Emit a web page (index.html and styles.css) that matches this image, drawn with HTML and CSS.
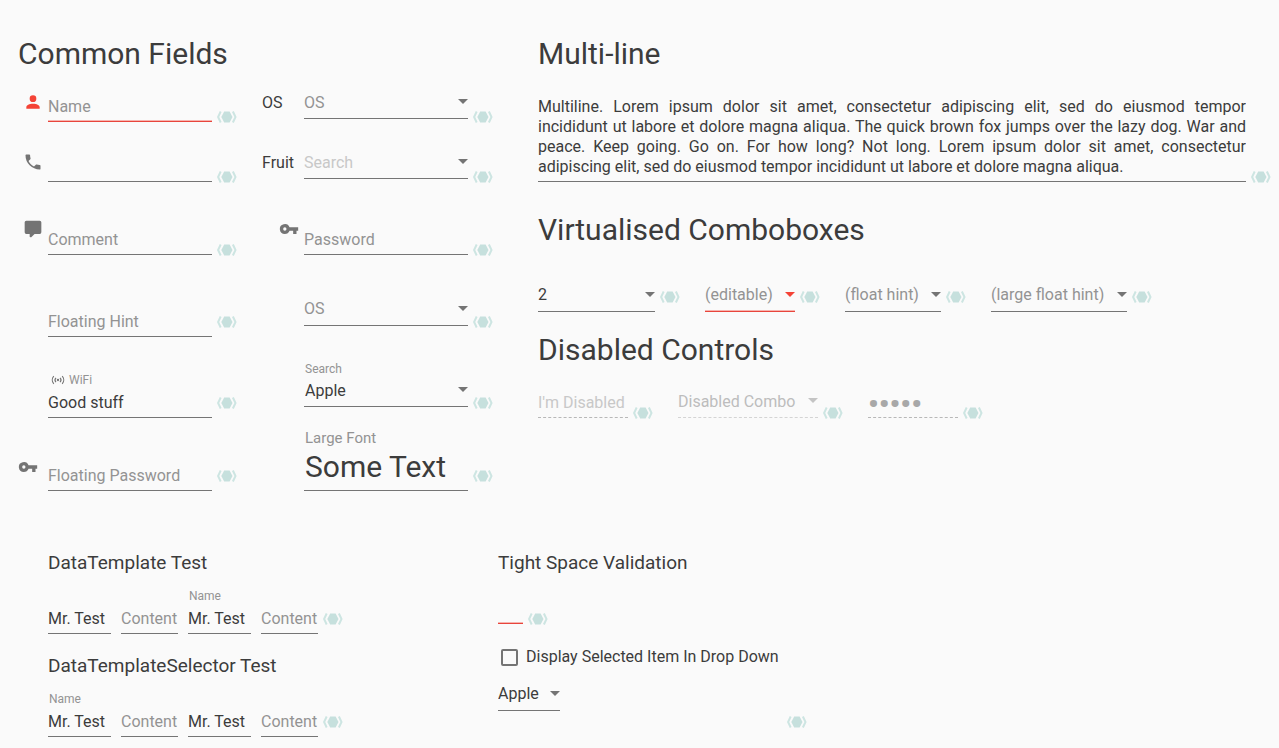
FILE: index.html
```html
<!DOCTYPE html>
<html lang="en">
<head>
  <meta charset="UTF-8" />
  <title>Fields</title>
  <meta name="viewport" content="width=device-width, initial-scale=1.0" />
  <link rel="stylesheet" href="styles.css">
</head>

<body>

  <!-- shared icons -->
  <svg class="sprite" aria-hidden="true">
    <symbol id="marker" viewBox="0 0 20 12">
      <path d="M7.200.6h5.400l2.900 5.400-2.900 5.400H7.200L4.300 6z" fill="#c6e0dd" />
      <path d="M3.700.5L1.100 6l2.600 5.500M15.900.5L18.500 6l-2.600 5.500" fill="none" stroke="#cde5e2" stroke-width="2" />
    </symbol>
    <symbol id="account" viewBox="0 0 24 24">
      <path d="M12 4a4 4 0 1 1 0 8 4 4 0 0 1 0-8zm0 10c4.400 0 8 1.800 8 4v2H4v-2c0-2.200 3.600-4 8-4z" />
    </symbol>
    <symbol id="phone" viewBox="0 0 24 24">
      <path d="M6.620 10.790c1.440 2.830 3.760 5.150 6.590 6.590l2.200-2.200c.28-.28.67-.36 1.020-.25 1.120.37 2.320.57 3.570.57a1 1 0 0 1 1 1V20a1 1 0 0 1-1 1A17 17 0 0 1 3 4a1 1 0 0 1 1-1h3.500a1 1 0 0 1 1 1c0 1.250.2 2.450.57 3.570.11.35.03.74-.25 1.020l-2.200 2.200z" />
    </symbol>
    <symbol id="comment" viewBox="0 0 24 24">
      <path d="M9 22a1 1 0 0 1-1-1v-3H4a2 2 0 0 1-2-2V4a2 2 0 0 1 2-2h16a2 2 0 0 1 2 2v12a2 2 0 0 1-2 2h-6.100l-3.700 3.710c-.2.190-.45.290-.7.290H9z" />
    </symbol>
    <symbol id="key" viewBox="0 0 24 24">
      <path d="M7 14a2 2 0 1 1 0-4 2 2 0 0 1 0 4zm5.650-4A6 6 0 1 0 7 18c2.610 0 4.830-1.670 5.650-4H17v4h4v-4h2v-4H12.650z" />
    </symbol>
    <symbol id="wifi" viewBox="0 0 24 24">
      <circle cx="12" cy="12" r="2" />
      <path d="M8.500 8.500a5 5 0 0 0 0 7M15.500 8.500a5 5 0 0 1 0 7M4.800 5.500a9.500 9.500 0 0 0 0 13M19.200 5.500a9.500 9.500 0 0 1 0 13" fill="none" stroke="currentColor" stroke-width="2" />
    </symbol>
  </svg>

  <main>
    <div class="top">

      <!-- Common fields -->
      <section>
        <h1>Common Fields</h1>
        <div class="common">
          <svg class="icon error"><use href="#account" /></svg>
          <input class="text error" type="text" placeholder="Name" aria-label="Name" />
          <svg class="marker"><use href="#marker" /></svg>
          <label class="side" for="os">OS</label>
          <select class="combo hint raised" id="os"><option>OS</option></select>
          <svg class="marker"><use href="#marker" /></svg>

          <svg class="icon"><use href="#phone" /></svg>
          <input class="text" type="tel" aria-label="Phone" />
          <svg class="marker"><use href="#marker" /></svg>
          <label class="side" for="fruit">Fruit</label>
          <select class="combo faint raised" id="fruit"><option>Search</option></select>
          <svg class="marker"><use href="#marker" /></svg>

          <svg class="icon high"><use href="#comment" /></svg>
          <input class="text" type="text" placeholder="Comment" aria-label="Comment" />
          <svg class="marker"><use href="#marker" /></svg>
          <svg class="icon high right"><use href="#key" /></svg>
          <input class="text" type="password" placeholder="Password" aria-label="Password" />
          <svg class="marker"><use href="#marker" /></svg>

          <input class="text first" type="text" placeholder="Floating Hint" aria-label="Floating Hint" />
          <svg class="marker lifted"><use href="#marker" /></svg>
          <select class="combo hint float-os" aria-label="OS"><option>OS</option></select>
          <svg class="marker lifted"><use href="#marker" /></svg>

          <div class="field first">
            <label class="wifi" for="wifi-name"><svg class="small-icon"><use href="#wifi" /></svg>WiFi</label>
            <input class="text" type="text" id="wifi-name" value="Good stuff" />
          </div>
          <svg class="marker lifted"><use href="#marker" /></svg>
          <div class="field float-search">
            <label for="search">Search</label>
            <select class="combo" id="search"><option>Apple</option></select>
          </div>
          <svg class="marker lifted"><use href="#marker" /></svg>

          <svg class="icon left"><use href="#key" /></svg>
          <input class="text" type="password" placeholder="Floating Password" aria-label="Floating Password" />
          <svg class="marker lifted"><use href="#marker" /></svg>
          <div class="field large">
            <label for="large">Large Font</label>
            <input class="text" type="text" id="large" value="Some Text" />
          </div>
          <svg class="marker lifted"><use href="#marker" /></svg>
        </div>
      </section>

      <!-- Right side -->
      <section>
        <h1>Multi-line</h1>
        <div class="line multi">
          <textarea class="text" rows="4" aria-label="Multiline">Multiline. Lorem ipsum dolor sit amet, consectetur adipiscing elit, sed do eiusmod tempor incididunt ut labore et dolore magna aliqua. The quick brown fox jumps over the lazy dog. War and peace. Keep going. Go on. For how long? Not long. Lorem ipsum dolor sit amet, consectetur adipiscing elit, sed do eiusmod tempor incididunt ut labore et dolore magna aliqua.</textarea>
          <svg class="marker"><use href="#marker" /></svg>
        </div>

        <h1 class="virtual-title">Virtualised Comboboxes</h1>
        <div class="row virtual">
          <div class="line">
            <select class="combo w-number" aria-label="Number"><option>2</option></select>
            <svg class="marker lifted"><use href="#marker" /></svg>
          </div>
          <div class="line">
            <select class="combo hint error w-small" aria-label="Editable"><option>(editable)</option></select>
            <svg class="marker lifted"><use href="#marker" /></svg>
          </div>
          <div class="line">
            <select class="combo hint w-hint" aria-label="Float hint"><option>(float hint)</option></select>
            <svg class="marker lifted"><use href="#marker" /></svg>
          </div>
          <div class="line">
            <select class="combo hint w-large" aria-label="Large float hint"><option>(large float hint)</option></select>
            <svg class="marker lifted"><use href="#marker" /></svg>
          </div>
        </div>

        <h1 class="disabled-title">Disabled Controls</h1>
        <div class="row disabled">
          <div class="line">
            <input class="text w-small" type="text" placeholder="I'm Disabled" aria-label="I'm Disabled" disabled />
            <svg class="marker"><use href="#marker" /></svg>
          </div>
          <div class="line">
            <select class="combo w-combo" aria-label="Disabled Combo" disabled><option>Disabled Combo</option></select>
            <svg class="marker"><use href="#marker" /></svg>
          </div>
          <div class="line">
            <input class="text dots w-small" type="password" value="apple" aria-label="Disabled password" disabled />
            <svg class="marker"><use href="#marker" /></svg>
          </div>
        </div>
      </section>
    </div>

    <div class="bottom">

      <!-- Data templates -->
      <section>
        <h2>DataTemplate Test</h2>
        <div class="template">
          <input class="text w-name" type="text" value="Mr. Test" aria-label="Name" />
          <input class="text w-content" type="text" placeholder="Content" aria-label="Content" />
          <div class="field w-name">
            <label for="name-1">Name</label>
            <input class="text" type="text" id="name-1" value="Mr. Test" />
          </div>
          <div class="line">
            <input class="text w-content" type="text" placeholder="Content" aria-label="Content" />
            <svg class="marker lifted"><use href="#marker" /></svg>
          </div>
        </div>

        <h2 class="selector-title">DataTemplateSelector Test</h2>
        <div class="template">
          <div class="field w-name">
            <label for="name-2">Name</label>
            <input class="text" type="text" id="name-2" value="Mr. Test" />
          </div>
          <input class="text w-content" type="text" placeholder="Content" aria-label="Content" />
          <input class="text w-name" type="text" value="Mr. Test" aria-label="Name" />
          <div class="line">
            <input class="text w-content" type="text" placeholder="Content" aria-label="Content" />
            <svg class="marker lifted"><use href="#marker" /></svg>
          </div>
        </div>
      </section>

      <!-- Validation -->
      <section>
        <h2>Tight Space Validation</h2>
        <div class="line tight">
          <input class="text error w-tiny" type="text" aria-label="Tight space" />
          <svg class="marker"><use href="#marker" /></svg>
        </div>
        <div class="line">
          <div class="drop-down">
            <label class="check"><input type="checkbox" />Display Selected Item In Drop Down</label>
            <select class="combo w-apple" aria-label="Fruit"><option>Apple</option></select>
          </div>
          <svg class="marker"><use href="#marker" /></svg>
        </div>
      </section>
    </div>
  </main>

</body>
</html>
```
FILE: styles.css
```css
* { margin: 0; padding: 0; box-sizing: border-box; }

body {
  background-color: #fafafa;
  color: #3c3c3c;
  font-family: Roboto, sans-serif;
  font-size: 16px;
  line-height: 20px;
}

.sprite {
  display: none;
}

main {
  padding: 34px 8px 0 18px;
}

h1 {
  font-size: 30px;
  line-height: 40px;
  font-weight: 400;
}
h2 {
  font-size: 19px;
  line-height: 24px;
  font-weight: 400;
}

.top {
  display: grid;
  grid-template-columns: auto 1fr;
  column-gap: 45px;
}

/* Inputs */
.text, .combo {
  display: block;
  width: 100%;
  font: inherit;
  color: inherit;
  background-color: transparent;
  border: none;
  border-bottom: 1px solid #747474;
  border-radius: 0;
  outline: none;
  appearance: none;
}
.text {
  height: 26px;
  padding-bottom: 5px;
}
.text::placeholder {
  color: #939393;
  opacity: 1;
}
.combo {
  height: 27px;
  padding-bottom: 6px;
  background-image: url("data:image/svg+xml,%3Csvg xmlns='http://www.w3.org/2000/svg' width='10' height='5'%3E%3Cpath d='M0 0h10L5 5z' fill='%23747474'/%3E%3C/svg%3E");
  background-repeat: no-repeat;
  background-position: right 7px;
}
.combo.hint { color: #939393; }
.combo.faint { color: #c8c8c8; }
.text.error, .combo.error {
  border-bottom: 1px solid #e8453c;
  box-shadow: inset 0 -1px 0 #f6b5b0;
}
.combo.error {
  background-image: url("data:image/svg+xml,%3Csvg xmlns='http://www.w3.org/2000/svg' width='10' height='5'%3E%3Cpath d='M0 0h10L5 5z' fill='%23f44336'/%3E%3C/svg%3E");
}

/* Label floating above its input */
.field label {
  display: flex;
  align-items: center;
  gap: 4px;
  padding-left: 1px;
  margin-bottom: 4px;
  font-size: 12px;
  line-height: 16px;
  color: #939393;
}
.field .wifi { padding-left: 3px; }
.field .combo {
  height: 26px;
  padding: 0 0 5px 1px;
  background-position: right 6px;
}
.small-icon {
  width: 14px;
  height: 14px;
  color: #747474;
  fill: currentColor;
}
.field.large label {
  font-size: 15px;
  line-height: 20px;
  margin-bottom: 2px;
}
.field.large .text {
  height: 41px;
  padding: 0 0 8px 1px;
  font-size: 30px;
}

.marker {
  flex: none;
  width: 20px;
  height: 12px;
  margin: 0 0 -1px 5px;
}
.marker.lifted { margin-bottom: 9px; }

.line {
  display: flex;
  align-items: flex-end;
}

/* Common fields grid */
.common {
  display: grid;
  grid-template-columns: 30px 164px 25px 67px 164px 25px;
  grid-template-rows: 36px 60px 73px 82px 81px 73px;
  align-items: end;
  margin-top: 12px;
}
.common .first { grid-column: 2; }
.common .raised, .common .side { margin-bottom: 3px; }
.common .float-os, .common .float-search {
  grid-column: 5;
  margin-bottom: 11px;
}
.common .large { grid-column: 5; }
.common .side {
  padding: 0 0 6px 25px;
}
.icon {
  width: 20px;
  height: 20px;
  margin-bottom: 10px;
  justify-self: center;
  fill: #747474;
}
.icon.high { margin-bottom: 16px; }
.icon.left { justify-self: start; margin-bottom: 14px; }
.icon.right { justify-self: end; margin-right: 5px; }
.icon.error { fill: #f44336; }
.common .raised {
  height: 26px;
  padding-bottom: 5px;
  background-position: right 6px;
}

/* Right side */
.multi { margin-top: 23px; }
.multi .text {
  height: auto;
  padding-bottom: 4px;
  text-align: justify;
  resize: none;
  overflow: hidden;
}
.row {
  display: flex;
  align-items: flex-end;
  gap: 25px;
}
.virtual-title { margin-top: 28px; }
.virtual { margin-top: 35px; }
.disabled-title { margin-top: 18px; }
.disabled { margin-top: 21px; }
.disabled .text, .disabled .combo {
  border-bottom: 1px dashed #b8b8b8;
  color: #a8a8a8;
  opacity: 1;
}
.disabled .text::placeholder { color: #c8c8c8; }
.disabled .combo {
  padding-bottom: 5px;
  color: #bdbdbd;
  border-color: #d4d4d4;
  background-image: url("data:image/svg+xml,%3Csvg xmlns='http://www.w3.org/2000/svg' width='10' height='5'%3E%3Cpath d='M0 0h10L5 5z' fill='%23c4c4c4'/%3E%3C/svg%3E");
}
.disabled .dots {
  padding-bottom: 3px;
  font-size: 30px;
  font-weight: 700;
}

/* Field widths */
.w-number { width: 117px; }
.w-small { width: 90px; }
.w-hint { width: 96px; }
.w-large { width: 136px; }
.w-combo { width: 140px; }
.w-name { width: 63px; }
.w-content { width: 57px; }
.w-tiny { width: 25px; }
.w-apple { width: 62px; }

/* Bottom sections */
.bottom {
  display: grid;
  grid-template-columns: 450px 1fr;
  padding-left: 30px;
  margin-top: 60px;
}
.template {
  display: flex;
  align-items: flex-end;
  gap: 10px;
  margin-top: 13px;
}
.selector-title { margin-top: 20px; }
.tight { margin-top: 23px; }
.drop-down {
  min-width: 284px;
  padding: 21px 0 16px;
}
.check {
  display: flex;
  align-items: center;
  gap: 8px;
  padding-left: 3px;
  margin-bottom: 15px;
  line-height: 24px;
}
.check input {
  width: 17px;
  height: 17px;
  border: 2px solid #747474;
  border-radius: 2px;
  appearance: none;
}
```
